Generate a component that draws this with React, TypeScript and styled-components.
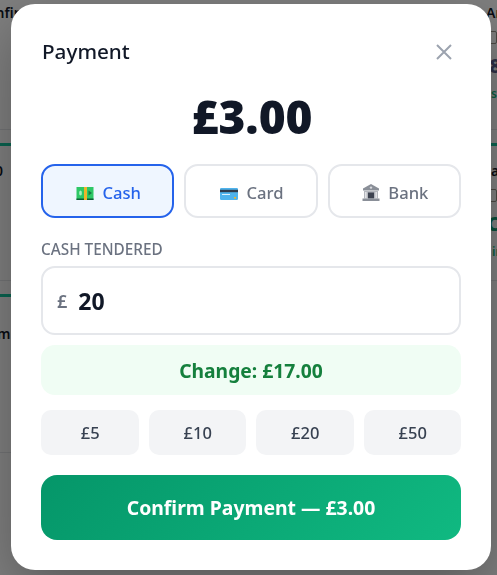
import React from "react";
import styled, { createGlobalStyle } from "styled-components";

const Global = createGlobalStyle`
  html, body { margin: 0; padding: 0; height: 100%; background: #fff; }
  * { box-sizing: border-box; }
  body { font-family: "Noto Sans", "Open Sans", sans-serif; overflow: hidden; }
`;

const Page = styled.div`
  width: 497px;
  height: 575px;
  overflow: hidden;
  display: grid;
  grid-template-columns: 11px 467px 19px;
  grid-template-rows: 143px 138px 159px;
  row-gap: 13px;
  margin-top: -13px;
  background: #fff;
`;

const Card = styled.div<{ $pad: number }>`
  border-top: 3px solid #14c8a0;
  border-bottom: 1px solid #e5e7eb;
  padding-top: ${(p) => p.$pad}px;
  display: flex;
  flex-direction: column;
  min-width: 0;
`;

const Name = styled.div<{ $shift?: number }>`
  color: #111827;
  font-size: 14px;
  line-height: 18px;
  font-weight: 600;
  white-space: nowrap;
  text-indent: ${(p) => p.$shift ?? 0}px;
`;

const Badge = styled.div`
  margin-top: 9px;
  width: 14px;
  height: 13px;
  margin-left: 5px;
  border: 1.5px solid #9a9388;
  border-radius: 2px;
`;

const Price = styled.div<{ $green?: boolean; $shift: number }>`
  margin-top: 8px;
  font-size: 20px;
  line-height: 28px;
  font-weight: 800;
  color: ${(p) => (p.$green ? "#0f9d75" : "#5a5f8c")};
  white-space: nowrap;
  text-indent: ${(p) => p.$shift}px;
`;

const Stock = styled.div<{ $shift: number }>`
  margin-top: 6px;
  font-size: 12px;
  line-height: 16px;
  font-weight: 600;
  color: #10b981;
  white-space: nowrap;
  text-indent: ${(p) => p.$shift}px;
`;

const Spacer = styled.div``;

const Overlay = styled.div`
  position: fixed;
  inset: 0;
  background: rgba(0, 0, 0, 0.5);
  display: flex;
  align-items: center;
  justify-content: center;
`;

const Modal = styled.div`
  width: 480px;
  height: 566px;
  margin-left: 5px;
  margin-bottom: 1px;
  background: #fff;
  border-radius: 24px;
  padding: 30px;
  display: flex;
  flex-direction: column;
  box-shadow: 0 20px 60px rgba(0, 0, 0, 0.3);
`;

const Header = styled.div`
  display: flex;
  align-items: center;
  justify-content: space-between;
  height: 36px;
`;

const Title = styled.h2`
  margin: -2px 0 0 1px;
  font-size: 20.7px;
  font-weight: 500;
  color: #111827;
`;

const CloseButton = styled.button`
  width: 20px;
  height: 20px;
  margin-right: 7px;
  padding: 0;
  border: 0;
  background: none;
  color: #9ca3af;
  display: flex;
  align-items: center;
  justify-content: center;
`;

const Amount = styled.div`
  margin-top: 16px;
  padding-left: 2px;
  height: 60px;
  line-height: 60px;
  text-align: center;
  font-size: 46px;
  font-weight: 900;
  color: #111827;
`;

const Methods = styled.div`
  margin-top: 18px;
  display: grid;
  grid-template-columns: repeat(3, 1fr);
  gap: 10px;
`;

const Method = styled.button<{ $active?: boolean }>`
  height: 54px;
  border-radius: 14px;
  border: 2px solid ${(p) => (p.$active ? "#2563eb" : "#e5e7eb")};
  background: ${(p) => (p.$active ? "#eff6ff" : "#fff")};
  color: ${(p) => (p.$active ? "#2563eb" : "#6b7280")};
  font-family: inherit;
  font-size: 16.6px;
  font-weight: 500;
  display: flex;
  align-items: center;
  justify-content: center;
  gap: 8px;
  padding: 2px 0 0 2px;
  svg { flex: none; margin-top: 1px; }
`;

const Label = styled.label`
  margin-top: 22px;
  font-size: 15.3px;
  line-height: 18px;
  font-weight: 500;
  color: #6b7280;
`;

const InputBox = styled.div`
  margin-top: 8px;
  height: 69px;
  border: 2px solid #e5e7eb;
  border-radius: 14px;
  padding: 0 14px;
  display: flex;
  align-items: center;
  gap: 11px;
`;

const Currency = styled.span`
  font-size: 18px;
  font-weight: 600;
  color: #6b7280;
`;

const CashInput = styled.input`
  flex: 1;
  min-width: 0;
  border: 0;
  outline: 0;
  padding: 0;
  background: none;
  font-family: inherit;
  font-size: 23px;
  font-weight: 700;
  color: #111827;
`;

const ChangeBar = styled.div`
  margin-top: 10px;
  height: 50px;
  border-radius: 14px;
  background: #f0fdf4;
  color: #15803d;
  font-size: 19.3px;
  font-weight: 700;
  display: flex;
  align-items: center;
  justify-content: center;
`;

const Quick = styled.div`
  margin-top: 15px;
  display: grid;
  grid-template-columns: repeat(4, 1fr);
  gap: 10px;
`;

const QuickButton = styled.button`
  height: 45px;
  border: 0;
  border-radius: 10px;
  background: #f3f4f6;
  color: #374151;
  font-family: inherit;
  font-size: 16.5px;
  font-weight: 500;
  padding: 0 0 0 1px;
`;

const Confirm = styled.button`
  margin-top: 20px;
  height: 65px;
  border: 0;
  border-radius: 16px;
  background: linear-gradient(135deg, #059669, #10b981);
  color: #fff;
  font-family: inherit;
  font-size: 19.4px;
  font-weight: 700;
  padding: 0;
`;

const CashIcon = () => (
  <svg width="18" height="18" viewBox="0 0 18 18">
    <rect x="0.5" y="3" width="17" height="13" fill="#2ec866" />
    <rect x="0.5" y="14.5" width="17" height="1.5" fill="#0d5c36" />
    <rect x="8" y="3" width="3" height="13" fill="#f0b429" />
    <ellipse cx="4.5" cy="9" rx="1.4" ry="2.6" fill="#a8f0c0" />
    <path d="M12.5 6.5L16 9L12.5 11.5Z" fill="#1a7a42" />
  </svg>
);

const CardIcon = () => (
  <svg width="18" height="18" viewBox="0 0 18 18">
    <rect x="0" y="4" width="18" height="12" rx="1.2" fill="#4fb3ec" />
    <rect x="0" y="5.8" width="18" height="2.4" fill="#2f3b4c" />
    <rect x="2" y="10" width="8" height="1" fill="#dff2fc" />
    <rect x="14" y="13" width="2" height="1.6" fill="#f0b429" />
  </svg>
);

const BankIcon = () => (
  <svg width="18" height="18" viewBox="0 0 18 18">
    <path d="M9 0L17 4.5V6.5H1V4.5Z" fill="#8a8f98" />
    <circle cx="9" cy="3.6" r="1.2" fill="#d8dadf" />
    <rect x="2" y="7" width="14" height="7.5" fill="#b4b7bd" />
    <rect x="6" y="8.5" width="6" height="6" fill="#3d4350" />
    <rect x="3" y="8" width="1.6" height="6.5" fill="#e2e3e6" />
    <rect x="13.4" y="8" width="1.6" height="6.5" fill="#e2e3e6" />
    <rect x="0.5" y="14.5" width="17" height="2.5" fill="#8a8f98" />
  </svg>
);

export default function App() {
  return (
    <>
      <Global />
      <Page>
        <Card $pad={14}><Name $shift={-22}>Confirm</Name></Card>
        <Spacer />
        <Card $pad={14}>
          <Name $shift={8}>Arro</Name>
          <Badge />
          <Price $shift={0}>£8</Price>
          <Stock $shift={13}>stock</Stock>
        </Card>
        <Card $pad={16}><Name $shift={-33}>£3.00</Name></Card>
        <Spacer />
        <Card $pad={16}>
          <Name $shift={13}>a</Name>
          <Badge />
          <Price $green $shift={9}>C</Price>
          <Stock $shift={14}>in</Stock>
        </Card>
        <Card $pad={28}><Name $shift={-3}>m</Name></Card>
        <Spacer />
        <Spacer />
      </Page>
      <Overlay>
        <Modal>
          <Header>
            <Title>Payment</Title>
            <CloseButton aria-label="Close">
              <svg width="16" height="16" viewBox="0 0 16 16" fill="none" stroke="currentColor" strokeWidth="2">
                <path d="M1 1L15 15M15 1L1 15" />
              </svg>
            </CloseButton>
          </Header>
          <Amount>£3.00</Amount>
          <Methods>
            <Method $active><CashIcon />Cash</Method>
            <Method><CardIcon />Card</Method>
            <Method><BankIcon />Bank</Method>
          </Methods>
          <Label>CASH TENDERED</Label>
          <InputBox>
            <Currency>£</Currency>
            <CashInput value="20" readOnly />
          </InputBox>
          <ChangeBar>Change: £17.00</ChangeBar>
          <Quick>
            <QuickButton>£5</QuickButton>
            <QuickButton>£10</QuickButton>
            <QuickButton>£20</QuickButton>
            <QuickButton>£50</QuickButton>
          </Quick>
          <Confirm>Confirm Payment — £3.00</Confirm>
        </Modal>
      </Overlay>
    </>
  );
}
